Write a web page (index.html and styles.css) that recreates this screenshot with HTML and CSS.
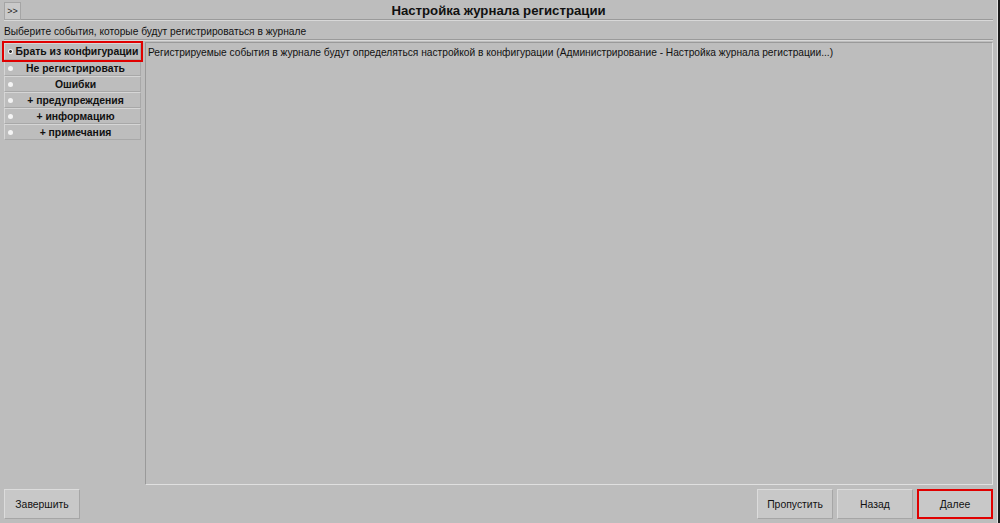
FILE: index.html
```html
<!DOCTYPE html>
<html lang="ru">
<head>
    <meta charset="UTF-8">
    <title>Настройка журнала регистрации</title>
    <link rel="stylesheet" href="styles.css">
</head>
<body>
    <div class="window">
        <div class="titlebar">
            <button class="toggle">&gt;&gt;</button>
            <h1 class="title">Настройка журнала регистрации</h1>
        </div>
        <div class="subtitle">Выберите события, которые будут регистрироваться в журнале</div>
        <div class="content">
            <ul class="options">
                <li class="option selected"><span class="dot"></span>Брать из конфигурации</li>
                <li class="option"><span class="dot"></span>Не регистрировать</li>
                <li class="option"><span class="dot"></span>Ошибки</li>
                <li class="option"><span class="dot"></span>+ предупреждения</li>
                <li class="option"><span class="dot"></span>+ информацию</li>
                <li class="option"><span class="dot"></span>+ примечания</li>
            </ul>
            <div class="panel">Регистрируемые события в журнале будут определяться настройкой в конфигурации (Администрирование - Настройка журнала регистрации...)</div>
        </div>
        <div class="footer">
            <button class="btn">Завершить</button>
            <div class="footer-right">
                <button class="btn">Пропустить</button>
                <button class="btn">Назад</button>
                <button class="btn focused">Далее</button>
            </div>
        </div>
    </div>
</body>
</html>
```

FILE: styles.css
```css
* {
    margin: 0;
    padding: 0;
    box-sizing: border-box;
    font-family: "Liberation Sans", Arial, sans-serif;
}

html, body {
    width: 1000px;
    height: 523px;
    overflow: hidden;
    background: #bdbdbd;
}

.window {
    width: 1000px;
    height: 523px;
    display: flex;
    flex-direction: column;
    padding: 2px 5px 0 4px;
    border-right: 2px solid #1a1a1a;
    box-shadow: inset -1px 0 0 #e2e2e2;
    color: #111;
}

.titlebar {
    height: 18px;
    display: flex;
    align-items: center;
    border-bottom: 1px solid #9a9a9a;
    box-shadow: 0 1px 0 #d8d8d8;
}

.toggle {
    width: 17px;
    height: 18px;
    font-size: 9px;
    background: #c9c9c9;
    border: 1px solid #a5a5a5;
    color: #222;
}

.title {
    flex: 1;
    text-align: center;
    font-size: 13.2px;
    font-weight: bold;
    margin-right: 17px;
}

.subtitle {
    height: 20px;
    font-size: 10.2px;
    line-height: 11px;
    padding-top: 6px;
    border-bottom: 1px solid #9a9a9a;
    box-shadow: 0 1px 0 #d8d8d8;
}

.content {
    flex: 1;
    display: flex;
    gap: 4px;
    padding-top: 2px;
}

.options {
    list-style: none;
    width: 137px;
    padding-top: 1px;
}

.option {
    height: 16px;
    display: flex;
    align-items: center;
    justify-content: center;
    padding-left: 6px;
    font-size: 10.4px;
    font-weight: bold;
    position: relative;
    background: #bdbdbd;
    border: 1px solid #a8a8a8;
    border-top-color: #d6d6d6;
    border-left-color: #d6d6d6;
}

.option.selected {
    height: 17px;
    outline: 2px solid #e00000;
    outline-offset: 0;
    padding-left: 9px;
    z-index: 1;
}

.dot {
    position: absolute;
    left: 3px;
    top: 5px;
    width: 5px;
    height: 5px;
    border-radius: 50%;
    background: #f4f4f4;
}

.selected .dot {
    background: radial-gradient(circle, #333 0 1.2px, #f4f4f4 1.6px);
}

.panel {
    flex: 1;
    margin-bottom: 2px;
    font-size: 10.2px;
    padding: 4px 2px;
    border: 1px solid #9a9a9a;
    border-right-color: #e0e0e0;
    border-bottom-color: #e0e0e0;
}

.footer {
    height: 36px;
    display: flex;
    justify-content: space-between;
    padding: 2px 0 5px;
}

.footer-right {
    display: flex;
    gap: 4px;
}

.btn {
    width: 76px;
    height: 30px;
    font-size: 10.4px;
    background: #c8c8c8;
    border: 1px solid #a6a6a6;
    border-top-color: #dcdcdc;
    border-left-color: #dcdcdc;
    color: #111;
}

.btn.focused {
    outline: 2px solid #e00000;
    outline-offset: -2px;
}
```
